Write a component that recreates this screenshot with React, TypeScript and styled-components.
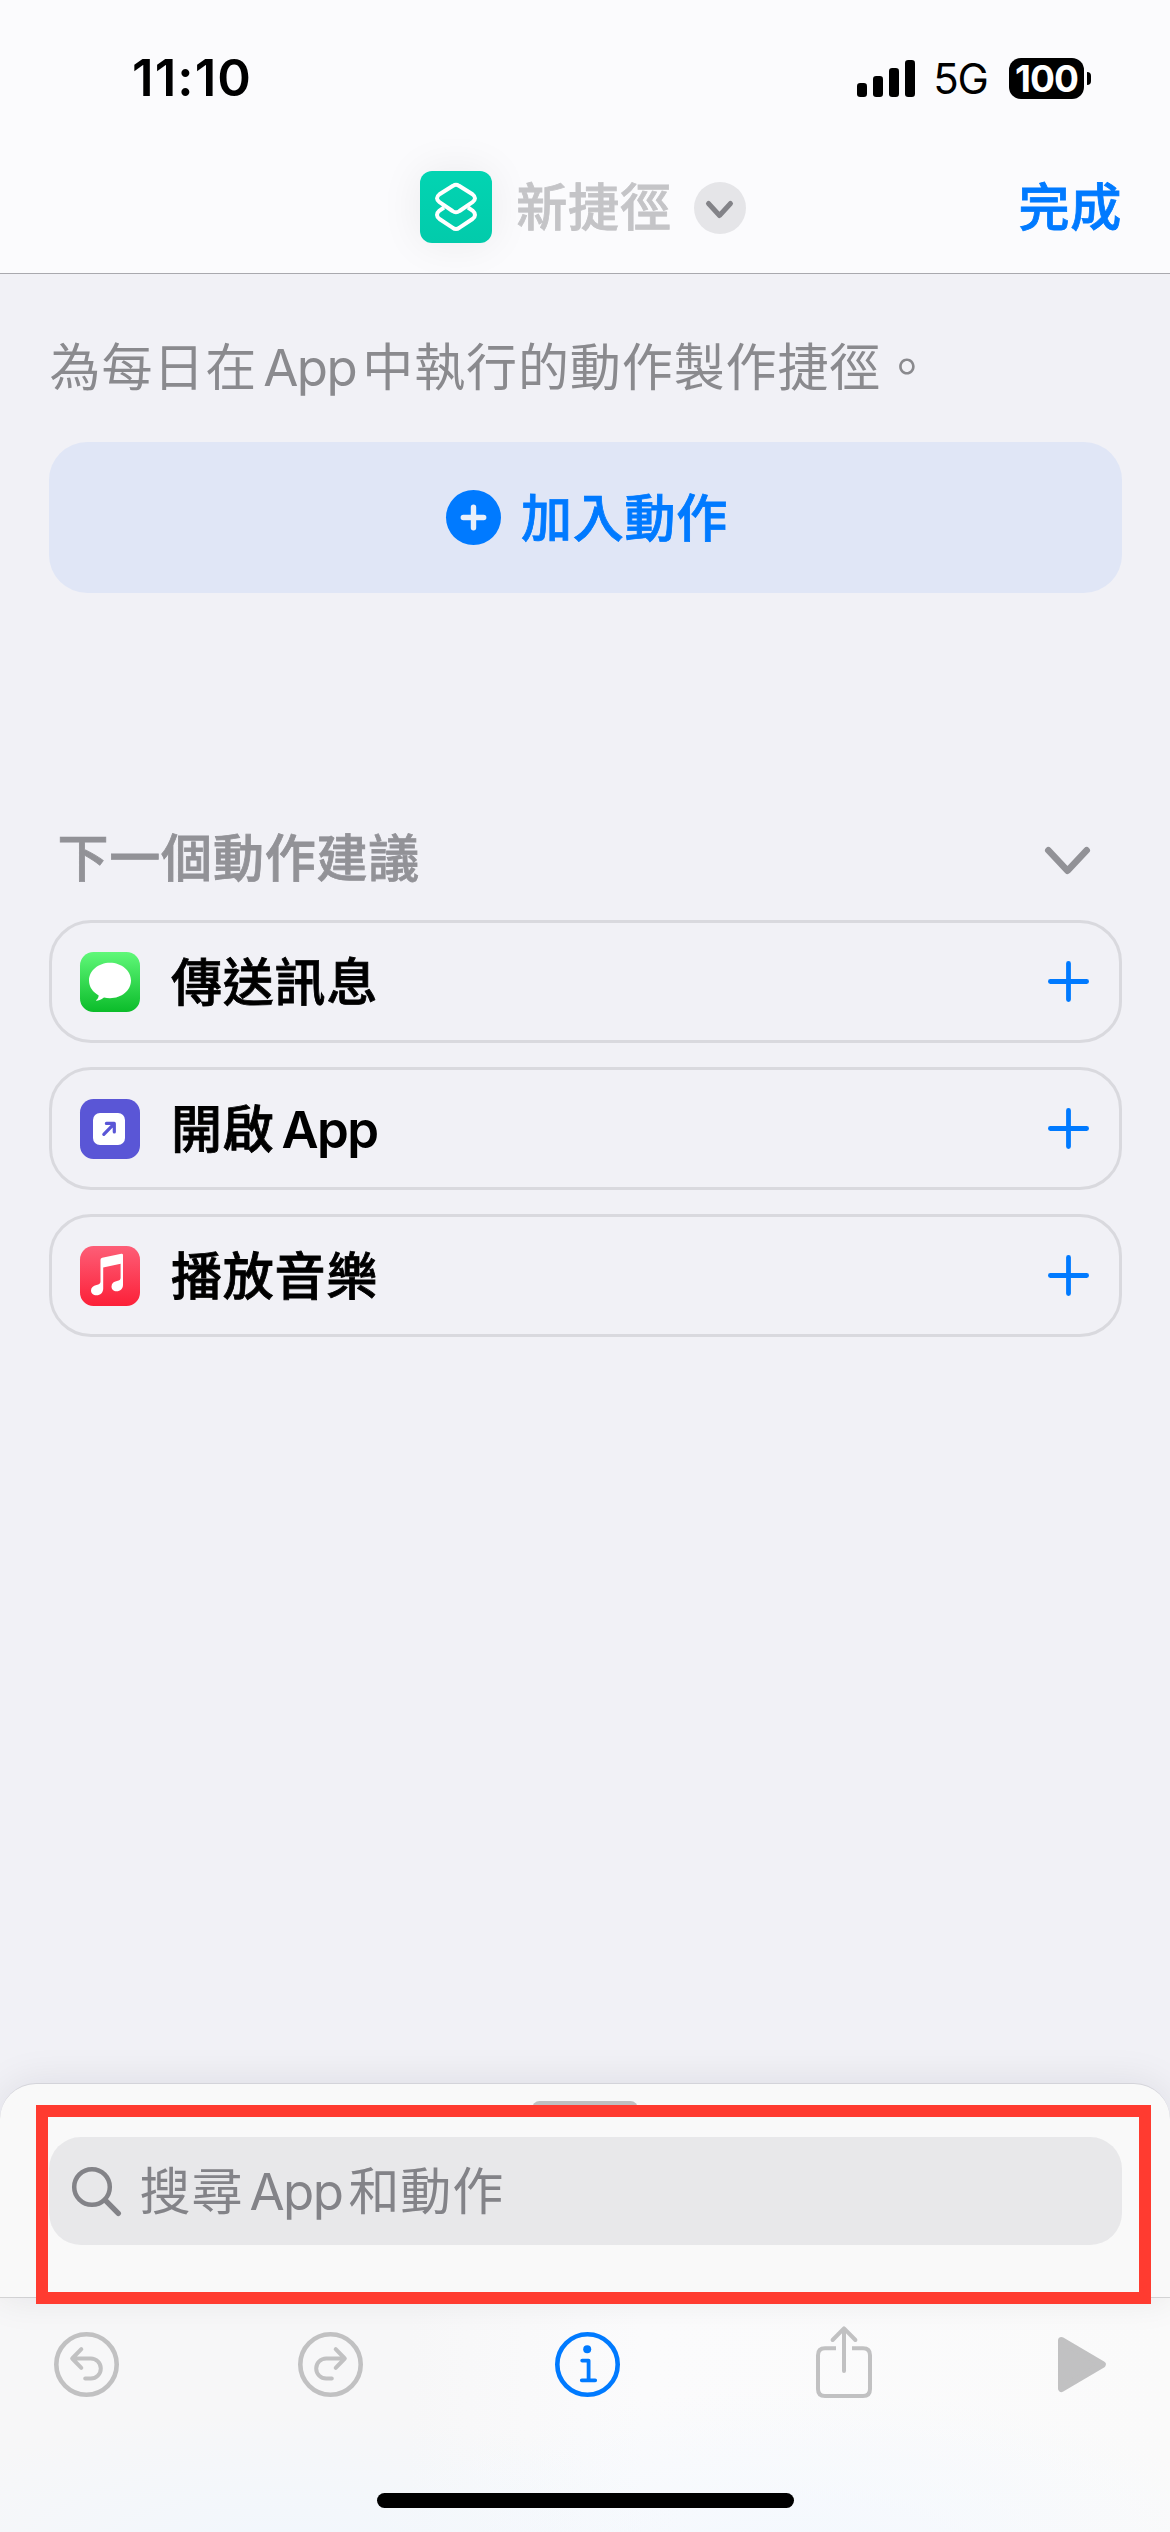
import React from 'react';
import styled, { createGlobalStyle } from 'styled-components';

const BLUE = '#007aff';
const GRAY = '#8a8a8e';
const DISABLED = '#c1c1c2';

const GlobalStyle = createGlobalStyle`
  *, *::before, *::after { box-sizing: border-box; }
  body {
    margin: 0;
    background: #f1f1f6;
    font-family: Inter, "Noto Sans CJK TC", sans-serif;
    -webkit-font-smoothing: antialiased;
  }
  svg { display: block; flex: none; overflow: visible; }
`;

const Screen = styled.div`
  display: flex;
  flex-direction: column;
  width: 1170px;
  height: 2532px;
  overflow: hidden;
  background: #f1f1f6;
`;

const Header = styled.header`
  height: 274px;
  flex: none;
  background: #fbfbfd;
  border-bottom: 1px solid #a9a9ae;
`;

const StatusBar = styled.div`
  display: flex;
  align-items: center;
  justify-content: space-between;
  height: 156px;
  padding: 0 79px 0 132px;
`;

const Clock = styled.span`
  font-size: 51px;
  font-weight: 600;
  line-height: 60px;
  letter-spacing: 1.1px;
  color: #000;
`;

const StatusIcons = styled.div`
  display: flex;
  align-items: center;
`;

const Network = styled.span`
  width: 56px;
  margin: 2px 20.5px 0 17.5px;
  font-size: 42px;
  line-height: 50px;
  letter-spacing: -1.3px;
  white-space: nowrap;
  text-align: center;
`;

const Battery = styled.div`
  display: flex;
  align-items: center;
  justify-content: center;
  width: 75px;
  height: 41px;
  border-radius: 12px;
  background: #000;
  color: #fff;
  font-size: 37px;
  font-weight: 700;
  line-height: 41px;
  letter-spacing: -1px;
`;

const BatteryTip = styled.div`
  width: 4px;
  height: 13px;
  margin-left: 3px;
  border-radius: 0 4px 4px 0;
  background: #000;
`;

const NavBar = styled.div`
  display: grid;
  grid-template-columns: 1fr auto 1fr;
  align-items: center;
  height: 102px;
  padding: 0 48px 0 44px;
`;

const TitleGroup = styled.div`
  grid-column: 2;
  display: flex;
  align-items: center;
`;

const ShortcutTile = styled.div`
  width: 72px;
  height: 72px;
  border-radius: 12px;
  background: linear-gradient(#02d4b2, #02cbab);
  box-shadow: 0 0 44px rgba(0, 0, 0, 0.07);
`;

const Label = styled.span<{ $color?: string; $light?: boolean }>`
  padding-top: 2px;
  font-size: 51px;
  line-height: 62px;
  letter-spacing: ${(p) => (p.$light ? 0.9 : 0.8)}px;
  word-spacing: ${(p) => (p.$light ? -9.1 : -7.5)}px;
  white-space: nowrap;
  color: ${(p) => p.$color ?? '#000'};
  font-weight: ${(p) => (p.$light ? 400 : 500)};
  -webkit-text-stroke: ${(p) => (p.$light ? 0 : 0.8)}px currentColor;
`;

const Title = styled(Label)`
  margin: 0 22px 0 24px;
`;

const DoneButton = styled(Label)`
  justify-self: end;
`;

const Latin = styled.span`
  letter-spacing: -1.6px;
`;

const Semibold = styled(Latin)`
  font-weight: 600;
  -webkit-text-stroke-width: 0;
`;

const RoundButton = styled.div`
  display: flex;
  align-items: center;
  justify-content: center;
  width: 52px;
  height: 52px;
  padding-top: 3px;
  margin-top: 2px;
  border-radius: 50%;
  background: #e5e5e8;
`;

const Main = styled.main`
  flex: 1;
  padding: 61px 48.5px 0;
`;

const Intro = styled.p`
  display: flex;
  margin: 0 0 44px 1px;
  height: 63px;
  align-items: center;
`;

const AddAction = styled.div`
  display: flex;
  align-items: center;
  justify-content: center;
  gap: 20px;
  height: 151px;
  padding-left: 4px;
  border-radius: 38px;
  background: #e0e6f6;
`;

const SectionHeader = styled.div`
  display: flex;
  align-items: center;
  justify-content: space-between;
  height: 61px;
  margin: 234px 32px 32px 9px;

  svg { margin-top: 6px; }
`;

const ActionList = styled.div`
  display: flex;
  flex-direction: column;
  gap: 24px;
`;

const ActionRow = styled.div`
  display: flex;
  align-items: center;
  height: 123px;
  padding: 0 30px 0 28.5px;
  border: 3px solid #d9d9de;
  border-radius: 42px;
`;

const ActionName = styled(Label)`
  flex: 1;
  margin-left: 31px;
`;

const Sheet = styled.section`
  flex: none;
  height: 214px;
  padding: 17px 48.5px 0;
  border-top: 1px solid #d4d4da;
  border-radius: 36px 36px 0 0;
  background: #f9f9f9;
  box-shadow: 0 0 40px rgba(0, 0, 30, 0.09);
  position: relative;
`;

const Grabber = styled.div`
  width: 106px;
  height: 15px;
  margin: 0 auto 21px;
  border-radius: 8px;
  background: #bfbfc0;
`;

const SearchField = styled.div`
  display: flex;
  align-items: center;
  gap: 19px;
  height: 108px;
  padding-left: 23px;
  border-radius: 32px;
  background: #e8e8ea;
`;

const Highlight = styled.div`
  position: absolute;
  z-index: 2;
  left: 35.5px;
  top: 21px;
  width: 1115.5px;
  height: 198.5px;
  border: solid #ff3b30;
  border-width: 12.5px;
`;

const BottomBar = styled.footer`
  flex: none;
  display: flex;
  flex-direction: column;
  align-items: center;
  justify-content: space-between;
  height: 235px;
  padding-bottom: 24px;
  border-top: 1px solid #d9d9da;
  background:
    radial-gradient(ellipse 420px 150px at 24% 112%, #f1f7fd, rgba(241, 247, 253, 0)),
    radial-gradient(ellipse 460px 170px at 68% 112%, #f3f8fe, rgba(243, 248, 254, 0)),
    linear-gradient(90deg, #f7f7f8, #f7f7f8 35%, #fbfbfc 55%, #fafafa);
`;

const Tools = styled.div`
  display: grid;
  grid-template-columns: 244px 257px 261px 242px auto;
  align-items: center;
  align-self: stretch;
  height: 80px;
  margin-top: 26px;
  padding-left: 54px;
`;

const HomeIndicator = styled.div`
  width: 417px;
  height: 15px;
  border-radius: 8px;
  background: #000;
`;

const SignalIcon = () => (
  <svg width="58" height="37" viewBox="0 0 58 37">
    <rect x="0" y="23" width="10" height="14" rx="3.2" />
    <rect x="16" y="16" width="10" height="21" rx="3.2" />
    <rect x="32" y="8" width="10" height="29" rx="3.2" />
    <rect x="48" y="0" width="10" height="37" rx="3.2" />
  </svg>
);

const ShortcutsGlyph = () => (
  <svg width="72" height="72" fill="none" stroke="#fff" strokeWidth="4" strokeLinejoin="round">
    <path d="M33 14.8Q36 12.8 39 14.8L52.5 23.3Q57.5 27.3 52.5 31.2L39.5 40Q36 42.6 32.5 40L19.5 31.2Q14.5 27.3 19.5 23.3Z" />
    <path d="M24 36.5L19.5 39.6Q14.5 44 19.5 48L32.5 56.6Q36 59.4 39.5 56.6L52.5 48Q57.5 44 52.5 39.6L48 36.5" />
  </svg>
);

const ChevronDown = ({ w, h, stroke, color }: { w: number; h: number; stroke: number; color: string }) => {
  const m = stroke / 2;
  return (
    <svg width={w} height={h} fill="none" stroke={color} strokeWidth={stroke} strokeLinecap="round" strokeLinejoin="round">
      <path d={`M${m} ${m}L${w / 2} ${h - m}L${w - m} ${m}`} />
    </svg>
  );
};

const PlusCircle = () => (
  <svg width="55" height="55">
    <circle cx="27.5" cy="27.5" r="27.5" fill={BLUE} />
    <path d="M17.3 27.5H37.7M27.5 17.3V37.7" stroke="#eaf0fa" strokeWidth="5.4" strokeLinecap="round" />
  </svg>
);

const PlusIcon = () => (
  <svg width="41" height="41" stroke={BLUE} strokeWidth="4.8" strokeLinecap="round">
    <path d="M2.4 20.5H38.6M20.5 2.4V38.6" />
  </svg>
);

const MessagesIcon = () => (
  <svg width="60" height="60">
    <defs>
      <linearGradient id="messages" x1="0" y1="0" x2="0" y2="1">
        <stop offset="0" stopColor="#60f879" />
        <stop offset="1" stopColor="#0bbc2a" />
      </linearGradient>
    </defs>
    <rect width="60" height="60" rx="13.5" fill="url(#messages)" />
    <path
      fill="#fff"
      d="M30 10.8C18.4 10.8 9 18.7 9 28.5C9 34.8 12.8 40.2 18.7 43.4C18.6 45.2 17.6 47 16.1 48.2C16 48.6 16.3 48.9 16.8 48.8C19.8 48.3 22.2 47.2 24 45.6C25.9 46 27.9 46.2 30 46.2C41.6 46.2 51 38.3 51 28.5C51 18.7 41.6 10.8 30 10.8Z"
    />
  </svg>
);

const OpenAppIcon = () => (
  <svg width="60" height="60">
    <rect width="60" height="60" rx="13.5" fill="#5a56d6" />
    <rect x="13" y="14" width="32" height="32" rx="7" fill="#fff" />
    <path
      d="M23.8 35.4L34 24.8M26.4 24.4H34.3V33"
      fill="none"
      stroke="#5a56d6"
      strokeWidth="3.2"
      strokeLinecap="round"
      strokeLinejoin="round"
    />
  </svg>
);

const MusicIcon = () => (
  <svg width="60" height="60">
    <defs>
      <linearGradient id="music" x1="0" y1="0" x2="0" y2="1">
        <stop offset="0" stopColor="#fd5e77" />
        <stop offset="1" stopColor="#fc2038" />
      </linearGradient>
    </defs>
    <rect width="60" height="60" rx="13.5" fill="url(#music)" />
    <path
      fill="#fff"
      d="M22.2 11.7L41.3 7.7Q43 7.4 43 9.1V39C43 42.6 40.4 45.3 36.6 45.3C33.6 45.3 31.5 43.2 31.5 40.5C31.5 37.4 33.6 35.5 37 34.9C39.5 34.5 40.6 34 40.6 31.8V17.8L23.2 21.4V42.8C23.2 46.6 20.4 49.3 16.5 49.3C13.3 49.3 11 47.3 11 44.5C11 41.5 13.2 39.5 16.5 38.9C19.3 38.4 20.5 37.8 20.5 35.6V13.7Q20.5 12 22.2 11.7Z"
    />
  </svg>
);

const SearchIcon = () => (
  <svg width="49" height="49" fill="none" stroke="#838388" strokeLinecap="round">
    <circle cx="20" cy="20" r="17.8" strokeWidth="4.5" />
    <path d="M33.2 33.2L46.3 46.3" strokeWidth="5.4" />
  </svg>
);

const TurnIcon = ({ flip }: { flip?: boolean }) => (
  <svg width="65" height="65" viewBox="0 0 65 65" fill="none" stroke={DISABLED} strokeLinecap="round" strokeLinejoin="round">
    <g transform={flip ? 'translate(65 0) scale(-1 1)' : undefined}>
      <circle cx="32.5" cy="32.5" r="30.2" strokeWidth="4.6" />
      <path d="M27.3 17.2L18.2 26.5L27.3 35.8M18.8 26.5H36.8A10 10 0 0 1 36.8 46.5H31.2" strokeWidth="4" />
    </g>
  </svg>
);

const InfoIcon = () => (
  <svg width="65" height="65" fill="none" stroke={BLUE} strokeLinecap="round" strokeLinejoin="round">
    <circle cx="32.5" cy="32.5" r="30.2" strokeWidth="4.6" />
    <circle cx="32.2" cy="17.2" r="4" fill={BLUE} stroke="none" />
    <path d="M27.2 28.6H33.6V48.3M26.8 48.3H40.2" strokeWidth="3.8" />
  </svg>
);

const ShareIcon = () => (
  <svg width="56" height="77" viewBox="0 0 56 77" fill="none" stroke={DISABLED} strokeWidth="4">
    <path d="M20 22.2H9Q2 22.2 2 29.2V63Q2 70 9 70H47Q54 70 54 63V29.2Q54 22.2 47 22.2H36" />
    <path d="M28 3V45M16.6 14L28 2.4L39.4 14" strokeLinecap="round" strokeLinejoin="round" />
  </svg>
);

const PlayIcon = () => (
  <svg width="48" height="55" fill={DISABLED} stroke={DISABLED} strokeWidth="7" strokeLinejoin="round">
    <path d="M3.5 3.5L44.3 27.5L3.5 51.5Z" />
  </svg>
);

const actions: { id: string; icon: React.ReactNode; name: React.ReactNode }[] = [
  { id: 'message', icon: <MessagesIcon />, name: '傳送訊息' },
  {
    id: 'open',
    icon: <OpenAppIcon />,
    name: (
      <>
        開啟 <Semibold>App</Semibold>
      </>
    ),
  },
  { id: 'music', icon: <MusicIcon />, name: '播放音樂' },
];

export default function App() {
  return (
    <Screen lang="zh-Hant">
      <GlobalStyle />
      <Header>
        <StatusBar>
          <Clock>11:10</Clock>
          <StatusIcons>
            <SignalIcon />
            <Network>5G</Network>
            <Battery>100</Battery>
            <BatteryTip />
          </StatusIcons>
        </StatusBar>
        <NavBar>
          <TitleGroup>
            <ShortcutTile>
              <ShortcutsGlyph />
            </ShortcutTile>
            <Title $color="#c4c4c7">新捷徑</Title>
            <RoundButton>
              <ChevronDown w={27} h={17} stroke={5} color="#838388" />
            </RoundButton>
          </TitleGroup>
          <DoneButton $color={BLUE}>完成</DoneButton>
        </NavBar>
      </Header>

      <Main>
        <Intro>
          <Label $color={GRAY} $light>
            為每日在 <Latin>App</Latin> 中執行的動作製作捷徑。
          </Label>
        </Intro>
        <AddAction>
          <PlusCircle />
          <Label $color={BLUE}>加入動作</Label>
        </AddAction>
        <SectionHeader>
          <Label $color="#929297">下一個動作建議</Label>
          <ChevronDown w={45} h={27} stroke={6.6} color="#929297" />
        </SectionHeader>
        <ActionList>
          {actions.map((a) => (
            <ActionRow key={a.id}>
              {a.icon}
              <ActionName>{a.name}</ActionName>
              <PlusIcon />
            </ActionRow>
          ))}
        </ActionList>
      </Main>

      <Sheet>
        <Grabber />
        <SearchField>
          <SearchIcon />
          <Label $color="#838388" $light>
            搜尋 <Latin>App</Latin> 和動作
          </Label>
        </SearchField>
        <Highlight />
      </Sheet>

      <BottomBar>
        <Tools>
          <TurnIcon />
          <TurnIcon flip />
          <InfoIcon />
          <ShareIcon />
          <PlayIcon />
        </Tools>
        <HomeIndicator />
      </BottomBar>
    </Screen>
  );
}
